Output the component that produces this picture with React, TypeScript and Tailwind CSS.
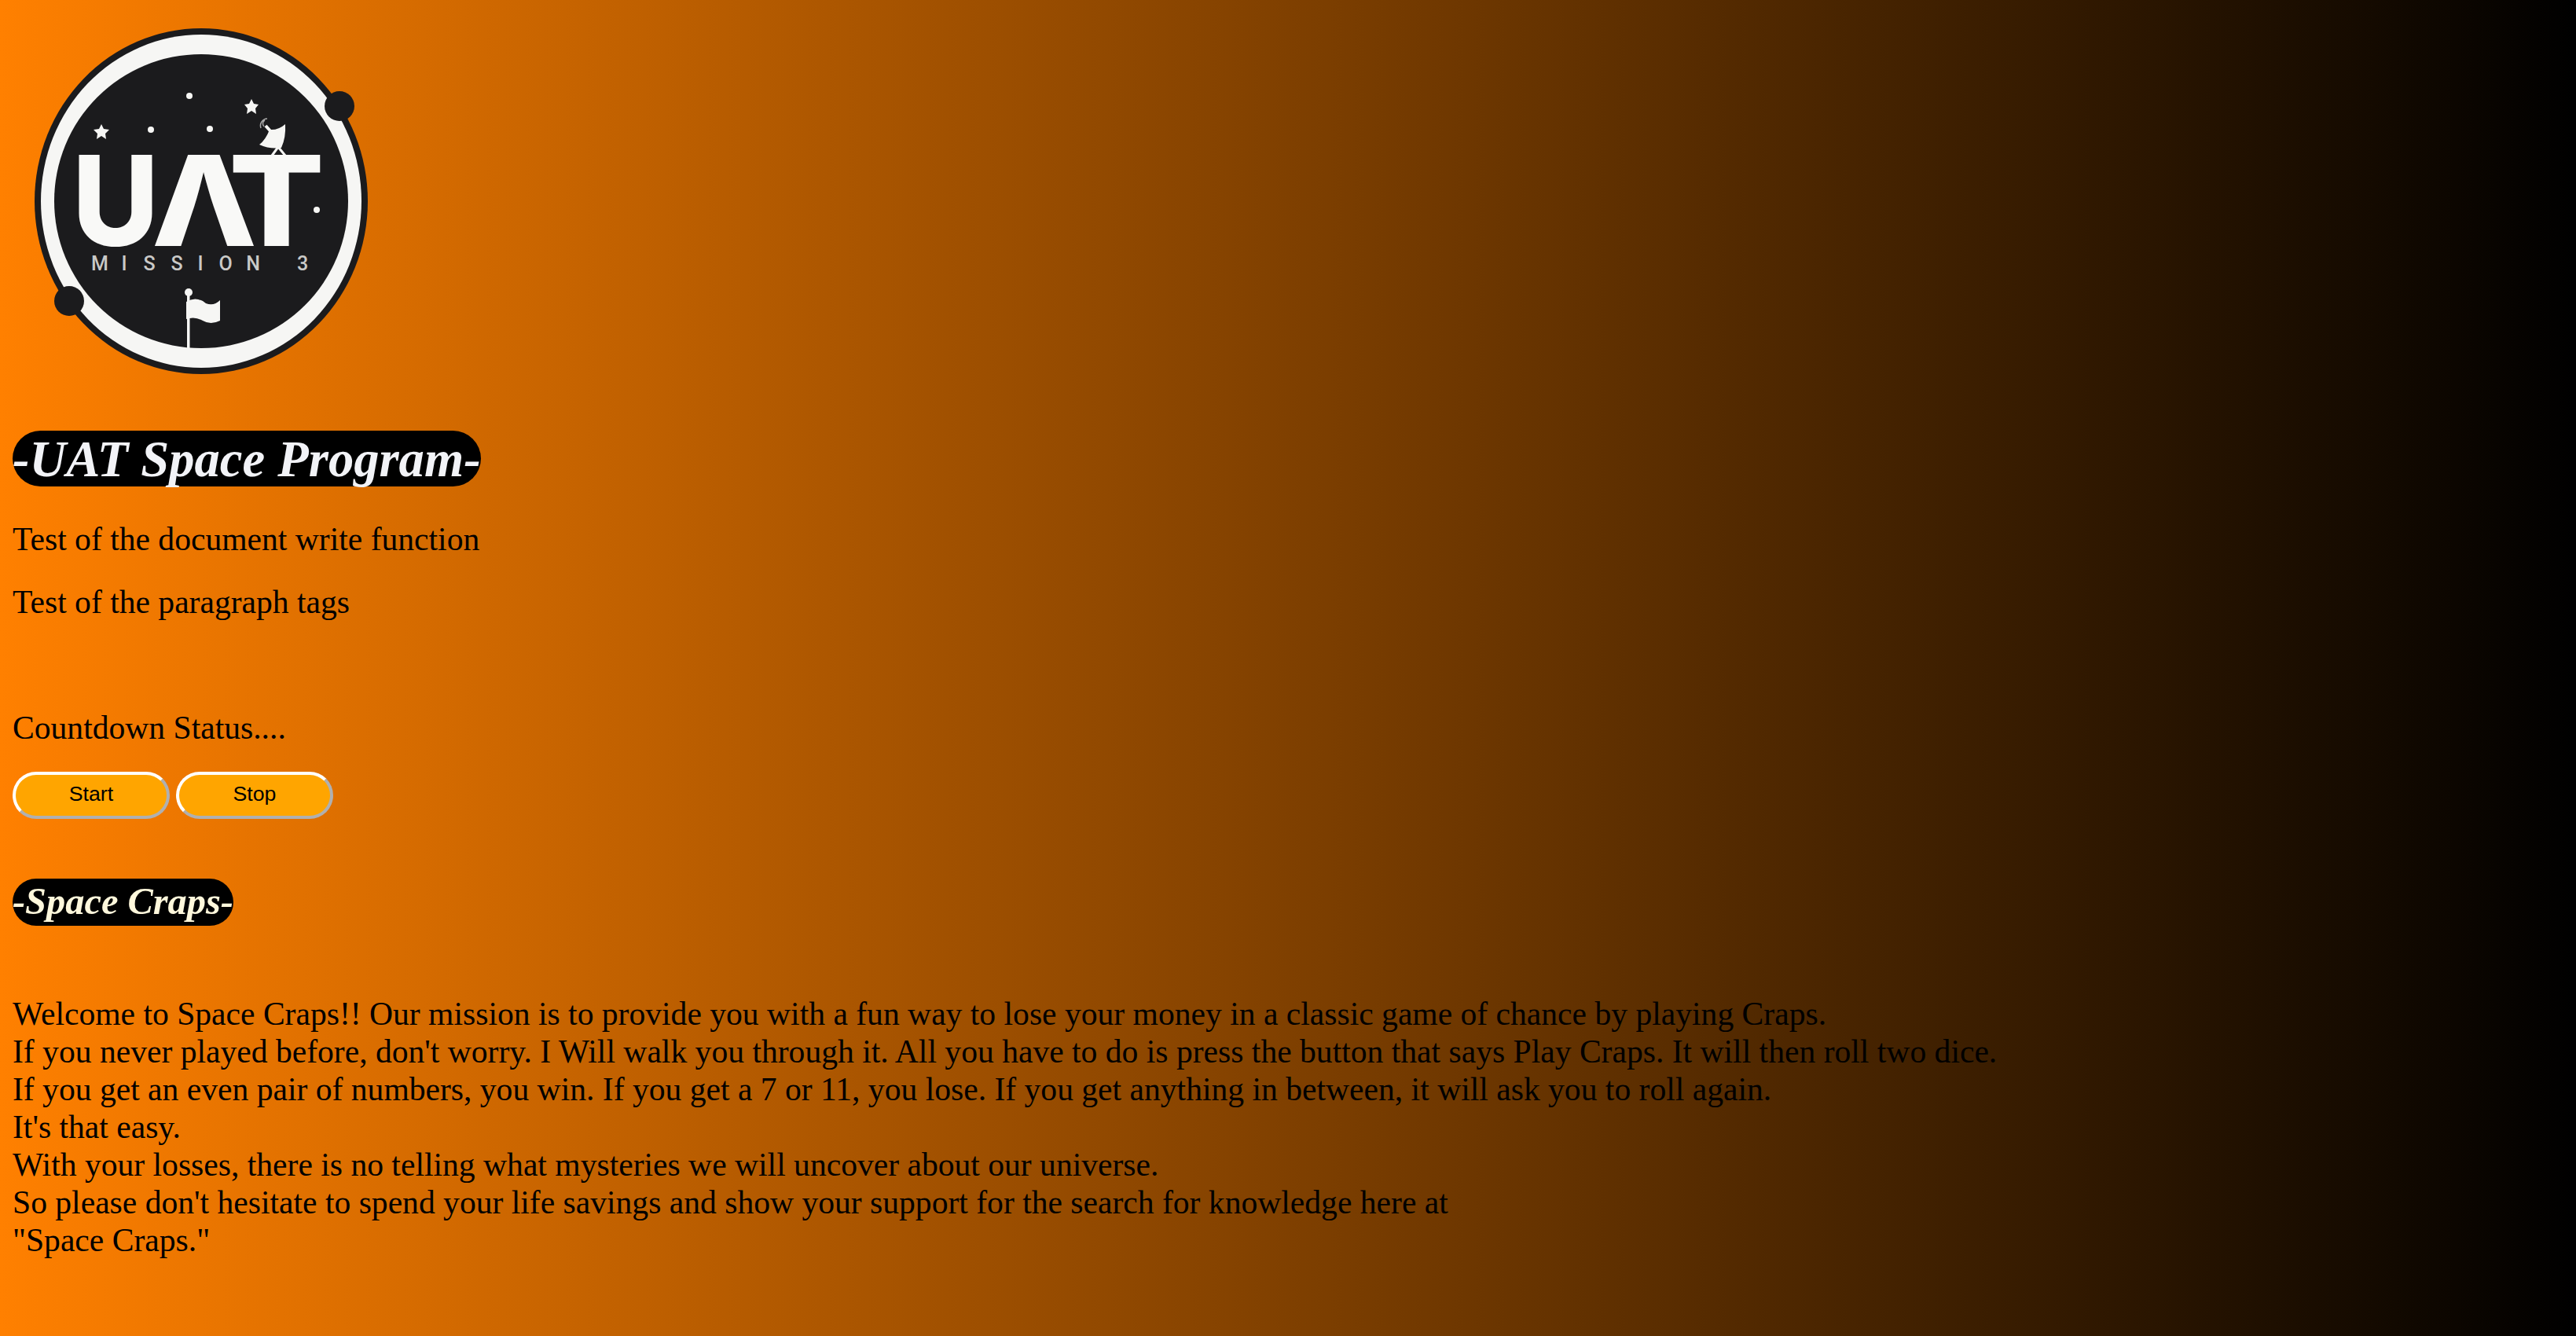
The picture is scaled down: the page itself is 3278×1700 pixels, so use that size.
import React from 'react'

const serif = "font-['Liberation_Serif',serif]"

function MissionLogo() {
  return (
    <svg viewBox="16 16 480 480" className="block w-[480px] h-[480px]">
      <ellipse cx="256" cy="256" rx="212" ry="220" fill="#1b1b1d" />
      <ellipse cx="256" cy="256" rx="204" ry="212" fill="#f6f6f4" />
      <circle cx="256" cy="256" r="187" fill="#1b1b1d" />
      <circle cx="432" cy="135" r="19" fill="#1b1b1d" />
      <circle cx="88" cy="383" r="19" fill="#1b1b1d" />

      {/* stars */}
      <g fill="#f6f6f4">
        <polygon points="129,158 132,164 139,165 134,170 135,177 129,173 123,177 124,170 119,165 126,164" />
        <polygon points="320,126 323,132 329,133 325,138 326,145 320,141 314,145 315,138 311,133 317,132" />
        <circle cx="241" cy="122" r="4" />
        <circle cx="192" cy="165" r="4" />
        <circle cx="267" cy="164" r="4" />
        <circle cx="403" cy="267" r="4" />
      </g>

      {/* dish */}
      <path d="M363 158 Q364 175 358 188 Q343 190 330 184 Q338 178 343 165 Q354 166 363 158 Z" fill="#f6f6f4" />
      <path d="M338 160 L347 170" stroke="#f6f6f4" strokeWidth="4" fill="none" />
      <path d="M354 187 L346 198 M354 187 L363 198" stroke="#f6f6f4" strokeWidth="3" fill="none" />
      <path d="M336 161 A5 5 0 0 1 337 153 M332 163 A9 9 0 0 1 340 151" stroke="#aaa" strokeWidth="1.5" fill="none" />

      {/* wordmark */}
      <g fill="#f9f9f7" fontFamily="Inter, sans-serif" fontWeight="800" fontSize="160">
        <text x="92" y="313" textLength="110" lengthAdjust="spacingAndGlyphs">U</text>
        <text x="193" y="313" textLength="134" lengthAdjust="spacingAndGlyphs">Λ</text>
        <text x="291" y="313" textLength="122" lengthAdjust="spacingAndGlyphs">T</text>
      </g>
      <text
        x="127 158 190 225 255 287 322 385"
        y="344"
        fill="#c9c9c7"
        fontFamily="Roboto, sans-serif"
        fontWeight="500"
        fontSize="25"
        textAnchor="middle"
      >
        MISSION3
      </text>

      {/* flag */}
      <circle cx="240" cy="372" r="5" fill="#f6f6f4" />
      <rect x="238" y="376" width="3.5" height="68" fill="#f6f6f4" />
      <path d="M237 384 Q250 376 262 386 Q272 390 280 382 L280 408 Q268 414 258 408 Q248 402 237 406 Z" fill="#f6f6f4" />
    </svg>
  )
}

export default function App() {
  return (
    <div className={`${serif} min-h-[1700px] bg-linear-to-r/srgb from-[#ff8000] to-black px-4 pt-4 text-black text-[41.6px] leading-[48px]`}>
      <MissionLogo />

      <h1 className="mt-[52px] w-fit rounded-[40px] bg-black pt-[2px] text-[64.6px] font-bold italic leading-[69px] text-[#f2f3f7]">
        -UAT Space Program-
      </h1>

      <p className="mt-[43px]">Test of the document write function</p>
      <p className="mt-[32px]">Test of the paragraph tags</p>
      <p className="mt-[112px]">Countdown Status....</p>

      {/* Countdown buttons */}
      <div className="mt-[32px] flex gap-2">
        {['Start', 'Stop'].map((label) => (
          <button
            key={label}
            className="h-[60px] w-[200px] rounded-full border-4 border-t-white border-l-white border-r-[#b0b0b0] border-b-[#b0b0b0] bg-[#ffa500] pb-[3px] font-['Liberation_Sans',sans-serif] text-[26.67px] leading-none text-black"
          >
            {label}
          </button>
        ))}
      </div>

      <h2 className="mt-[76px] w-fit rounded-[40px] bg-black pb-[2px] text-[48.4px] font-bold italic leading-[58px] text-[#fff8dc]">
        -Space Craps-
      </h2>

      <div className="mt-[88px]">
        <p>Welcome to Space Craps!! Our mission is to provide you with a fun way to lose your money in a classic game of chance by playing Craps.</p>
        <p>If you never played before, don't worry. I Will walk you through it. All you have to do is press the button that says Play Craps. It will then roll two dice.</p>
        <p>If you get an even pair of numbers, you win. If you get a 7 or 11, you lose. If you get anything in between, it will ask you to roll again.</p>
        <p>It's that easy.</p>
        <p>With your losses, there is no telling what mysteries we will uncover about our universe.</p>
        <p>So please don't hesitate to spend your life savings and show your support for the search for knowledge here at</p>
        <p>"Space Craps."</p>
      </div>
    </div>
  )
}
